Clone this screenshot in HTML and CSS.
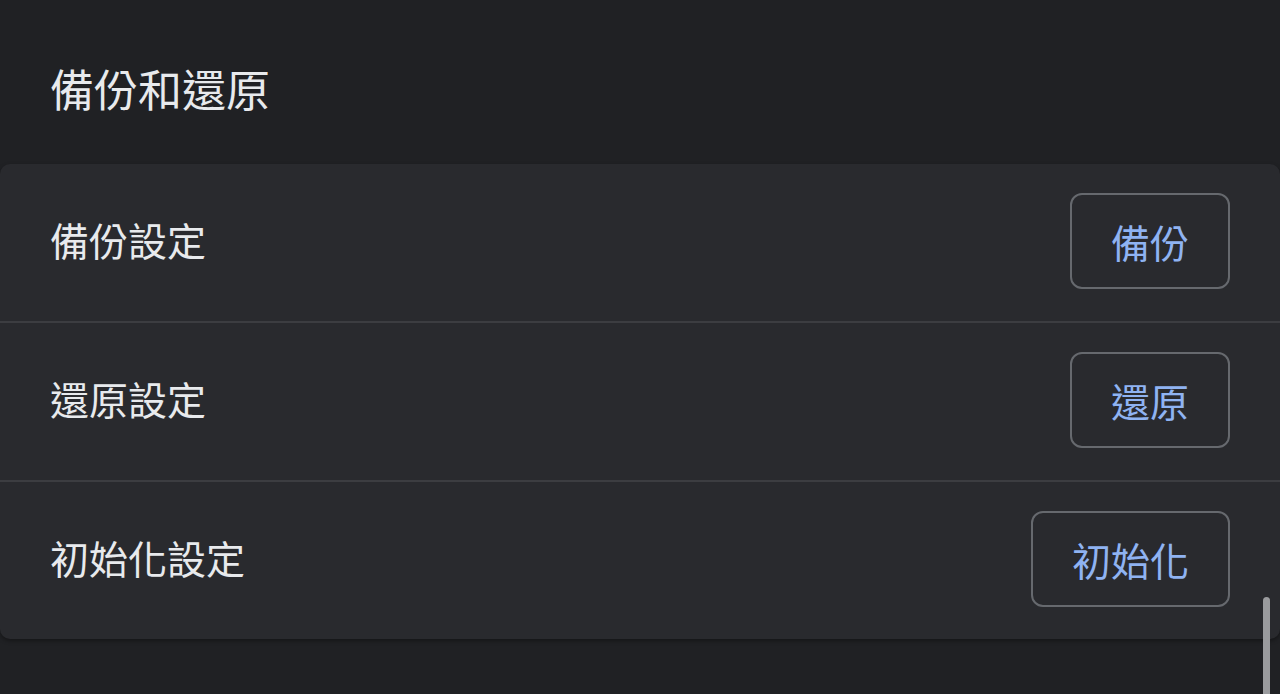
FILE: index.html
```html
<!DOCTYPE html>
<html lang="zh-Hant">
<head>
<meta charset="utf-8">
<title>備份和還原</title>
<link rel="stylesheet" href="styles.css">
</head>
<body>
<div class="page">
  <h1 class="title">備份和還原</h1>
  <section class="card">
    <div class="row">
      <span class="label">備份設定</span>
      <button class="btn">備份</button>
    </div>
    <div class="row">
      <span class="label">還原設定</span>
      <button class="btn">還原</button>
    </div>
    <div class="row">
      <span class="label">初始化設定</span>
      <button class="btn">初始化</button>
    </div>
  </section>
  <div class="scrollbar"></div>
</div>
</body>
</html>
```
FILE: styles.css
```css
html, body {
  margin: 0;
  padding: 0;
  background: #202124;
  height: 100%;
  overflow: hidden;
}
body {
  font-family: "Noto Sans CJK TC", "Noto Sans", sans-serif;
  color: #e8eaed;
}
.page {
  position: relative;
  height: 694px;
}
.title {
  margin: 0;
  padding: 62px 50px 50px;
  font-size: 44px;
  font-weight: 400;
  line-height: 52px;
  color: #e8eaed;
}
.card {
  background: #292a2e;
  border-radius: 10px;
  box-shadow: 0 2px 4px rgba(0, 0, 0, 0.35);
  display: flex;
  flex-direction: column;
}
.row {
  height: 157px;
  box-sizing: border-box;
  display: flex;
  align-items: center;
  justify-content: space-between;
  padding: 0 50px 3px 50px;
}
.row + .row {
  height: 159px;
  border-top: 2px solid #3c3d41;
}
.label {
  font-size: 39px;
  line-height: 1;
  color: #e8eaed;
  margin-bottom: 3px;
}
.btn {
  height: 96px;
  box-sizing: border-box;
  padding: 0 39px;
  border: 2px solid #66696e;
  border-radius: 12px;
  background: transparent;
  color: #8fb3f2;
  font-family: "Noto Sans CJK TC", "Noto Sans", sans-serif;
  font-size: 39px;
  line-height: 1;
}
.scrollbar {
  position: absolute;
  left: 1263px;
  top: 597px;
  width: 7px;
  height: 110px;
  border-radius: 4px;
  background: #9a9b9e;
}
```
